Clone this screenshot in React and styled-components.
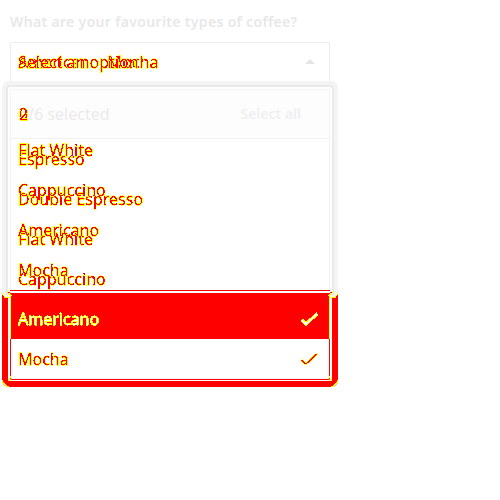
import React from "react";
import styled, { createGlobalStyle } from "styled-components";

const Global = createGlobalStyle`
  * { box-sizing: border-box; }
  body { margin: 0; background: #fff; font-family: "Noto Sans", "Open Sans", sans-serif; }
`;
const Page = styled.main`
  display: flex; flex-direction: column; align-items: flex-start;
  width: 500px; height: 500px; padding: 12px 2px; overflow: hidden; background: #fff;
`;
const Question = styled.div`
  display: flex; flex-direction: column; gap: 10px; padding: 0 8px;
`;
const Label = styled.div`
  font-size: 14px; line-height: 20px; font-weight: 600; color: #e8e8e8;
  letter-spacing: 0.335px; white-space: nowrap;
`;
const Field = styled.div`
  display: flex; align-items: center; justify-content: space-between;
  width: 320px; height: 39px; padding: 0 14px 0 7px;
  border: 1px solid #ededed; border-bottom: 0; border-radius: 2px 2px 0 0;
`;
const Layers = styled.div`
  display: grid; align-items: center; font-size: 16px; line-height: 22px;
  white-space: nowrap;
  > * { grid-area: 1 / 1; }
`;
const Ink = styled.span`
  padding-bottom: ${(p) => (p.$raised ? "18px" : "0")};
  font-size: 16px; line-height: 22px; letter-spacing: 0;
  -webkit-text-stroke: 0.45px #000; filter: url(#${(p) => p.$tone || "red"});
`;
const Arrow = styled.svg` width: 10px; height: 6px; display: block; `;
const Frame = styled.section`
  display: grid; grid-template: 212px 94px / 336px;
`;
const Ring = styled.div`
  grid-area: 1 / 1 / 3 / 2; padding: 4px; background: #f4f4f4; border-radius: 7px;
`;
const InnerRing = styled.div`
  height: 100%; border: 2px solid #eaeaea; border-radius: 4px; padding: 2px; background: #fff;
`;
const Panel = styled.div`
  height: 100%; border: 1px solid #f3f3f3; border-radius: 2px;
`;
const Summary = styled.header`
  display: flex; justify-content: space-between; align-items: center; height: 49px;
  padding: 0 28px 0 8px; background: #fdfdfd; border-bottom: 1px solid #f1f1f1;
`;
const Count = styled.div`
  display: flex; font-size: 16px; line-height: 22px; color: #ebebeb;
`;
const SelectAll = styled.span`
  font-size: 14px; line-height: 20px; font-weight: 600; color: #f0f0f0;
`;
const Row = styled.div`
  display: flex; align-items: center; justify-content: space-between;
  height: 40px; padding: 0 10px 0 7px; position: relative; z-index: ${(p) => (p.$front ? 2 : 0)};
`;
const Changed = styled.div`
  grid-area: 2 / 1; position: relative; z-index: 1; padding: 0 2px 1px;
  border: 6px solid #f00; border-top: 0; border-radius: 0 0 7px 7px; pointer-events: none;
  &::before {
    content: ""; position: absolute; left: 2px; top: -3px; width: 320px; height: 1px; background: #f00;
  }
`;
const Inner = styled.div`
  height: 87px; border: 1px solid #f00; border-top: 0; border-radius: 0 0 2px 2px;
`;
const Selected = styled.div`
  height: 46px; margin: 0 -1px; background: #f00; border: solid #ff0; border-width: 0 1px;
`;
const Corner = styled.svg`
  position: absolute; width: 12px; height: 12px; fill: none;
  ${(p) => (p.$right ? "right: -6px; transform: scaleX(-1);" : "left: -6px;")}
  ${(p) => (p.$bottom ? "bottom: -6px;" : "top: -4px;")}
`;
const CheckIcon = styled.svg` width: 19px; height: 16px; fill: none; `;

const rows = [
  ["Espresso", "Flat White"],
  ["Double Espresso", "Cappuccino"],
  ["Flat White", "Americano"],
  ["Cappuccino", "Mocha"],
];

function Check({ light }) {
  return (
    <CheckIcon viewBox="0 0 19 16" shapeRendering="crispEdges">
      <path d="M1.5 9 L6 13 L17.5 2.5" stroke="#ff0" strokeWidth={light ? 3.4 : 2.6} />
      <path d="M1.5 9 L6 13 L17.5 2.5" stroke={light ? "#fff" : "#f00"} strokeWidth={light ? 1.6 : 1.3} />
    </CheckIcon>
  );
}

function TopCorner({ right }) {
  return (
    <Corner $right={right} viewBox="0 0 12 12" shapeRendering="crispEdges">
      <path d="M0 4 Q1 9 6 9 H6 V4Z" fill="#f4f4f4" />
      <path d="M4 0H6V7H4Z" fill="#eaeaea" />
      <path d="M6 0H8V7H6Z" fill="#fff" />
      <path d="M.5 4 V5.5 L3 8.5 H7.5 L9.5 6.5" stroke="#ff0" />
      <path d="M5.5 2.5 L6.5 5.5 H9" stroke="#ff0" />
      <path d="M6 3.5H7.5L8.5 5" stroke="#f00" />
    </Corner>
  );
}

function BottomCorner({ right }) {
  return (
    <Corner $right={right} $bottom viewBox="0 0 12 12" shapeRendering="crispEdges">
      <path d="M.5 5 V7 L5 11.5 H7" stroke="#ff0" />
      <path d="M6.5 3 V4.5 L8 5.5 H9" stroke="#ff0" />
      <path d="M8.5 1 V2.5 L10 3.5" stroke="#ff0" />
    </Corner>
  );
}

const tint = "0 0 0 0 1  0 0 0 1 0  0 0 0 0 0  0 0 0 1 0";
const lightTint = "0 0 0 0 1  0 0 0 0 1  0 0 0 1 0  0 0 0 1 0";
const mask = "0 1 1 1 1 1 1 1";

export default function App() {
  return (
    <Page>
      <Global />
      <svg width="0" height="0" style={{ position: "absolute" }}>
        <filter id="red" colorInterpolationFilters="sRGB">
          <feColorMatrix values={tint} />
          <feComponentTransfer>
            <feFuncG type="discrete" tableValues="1 1 1 1 1 1 0 0" />
            <feFuncA type="discrete" tableValues={mask} />
          </feComponentTransfer>
        </filter>
        <filter id="white" colorInterpolationFilters="sRGB">
          <feColorMatrix values={lightTint} />
          <feComponentTransfer>
            <feFuncB type="discrete" tableValues="0 0 0 0 0 0 0 1" />
            <feFuncA type="discrete" tableValues={mask} />
          </feComponentTransfer>
        </filter>
      </svg>
      <Question>
        <Label>What are your favourite types of coffee?</Label>
        <Field>
          <Layers><Ink>Americano, Mocha</Ink><Ink>Select an option</Ink></Layers>
          <Arrow viewBox="0 0 10 6"><path d="M0 5 5 0 10 5Z" fill="#e5e5e5" /></Arrow>
        </Field>
      </Question>
      <Frame>
        <Ring>
          <InnerRing>
            <Panel>
              <Summary>
                <Count><Layers><Ink>0</Ink><Ink>2</Ink></Layers>/6 selected</Count>
                <SelectAll>Select all</SelectAll>
              </Summary>
              {rows.map(([current, previous]) => (
                <Row key={current}>
                  <Layers><Ink>{current}</Ink><Ink $raised>{previous}</Ink></Layers>
                </Row>
              ))}
              <Row $front><Ink $tone="white">Americano</Ink><Check light /></Row>
              <Row $front><Ink>Mocha</Ink><Check /></Row>
            </Panel>
          </InnerRing>
        </Ring>
        <Changed>
          <Inner><Selected /></Inner>
          <TopCorner /><TopCorner right />
          <BottomCorner /><BottomCorner right />
        </Changed>
      </Frame>
    </Page>
  );
}
